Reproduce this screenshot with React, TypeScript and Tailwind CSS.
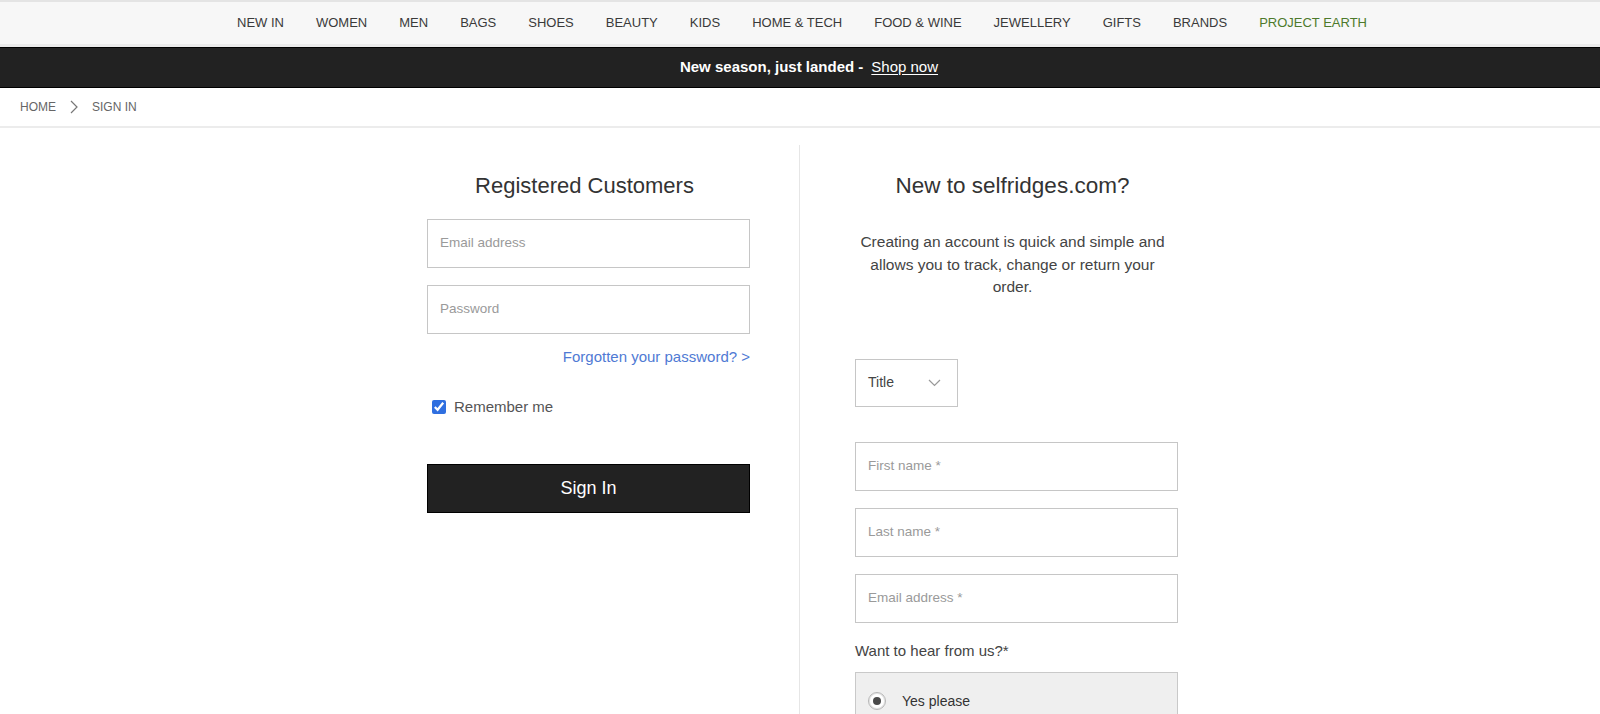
import React from "react";

const navItems = [
  "NEW IN",
  "WOMEN",
  "MEN",
  "BAGS",
  "SHOES",
  "BEAUTY",
  "KIDS",
  "HOME & TECH",
  "FOOD & WINE",
  "JEWELLERY",
  "GIFTS",
  "BRANDS",
];

function TextInput({ placeholder }: { placeholder: string }) {
  return (
    <div className="h-[49px] w-[323px] border border-[#c6c6c6] bg-white flex items-center pl-[12px]">
      <span className="text-[13.5px] text-[#9a9a9a]">{placeholder}</span>
    </div>
  );
}

export default function App() {
  return (
    <div
      className="min-h-[714px] bg-white text-[#333]"
      style={{ fontFamily: '"Liberation Sans", Arial, sans-serif' }}
    >
      {/* Top navigation */}
      <div className="border-t-2 border-[#e4e4e4] border-b-[3px] border-b-[#ebebeb] bg-[#f7f7f7] h-[47px] flex items-center justify-center">
        <nav className="flex items-center gap-[32px] text-[13px] text-[#3a3a3a] -mt-[1px] pl-[4px]">
          {navItems.map((n) => (
            <span key={n}>{n}</span>
          ))}
          <span className="text-[#4d7a2c]">PROJECT EARTH</span>
        </nav>
      </div>

      {/* Promo banner */}
      <div className="h-[41px] bg-[#222] border-y border-black flex items-center justify-center text-white text-[15px] pl-[18px]">
        <span className="font-bold">New season, just landed -</span>
        <span className="ml-[8px] underline underline-offset-2">Shop now</span>
      </div>

      {/* Breadcrumb */}
      <div className="h-[40px] border-b-2 border-[#ececec] flex items-center pl-[20px] text-[12px] text-[#666]">
        <span>HOME</span>
        <svg width="8" height="14" viewBox="0 0 8 14" className="ml-[14px] mr-[14px]">
          <polyline points="1,1 7,7 1,13" fill="none" stroke="#777" strokeWidth="1.2" />
        </svg>
        <span>SIGN IN</span>
      </div>

      {/* Main content */}
      <div className="flex justify-center pt-[17px] pl-[5px]">
        {/* Left column */}
        <div className="w-[323px] mr-[49px] pt-[27px] flex flex-col">
          <h2 className="h-[28px] leading-[28px] text-[22px] text-center text-[#333] pr-[8px]">
            Registered Customers
          </h2>
          <div className="mt-[19px]">
            <TextInput placeholder="Email address" />
          </div>
          <div className="mt-[17px]">
            <TextInput placeholder="Password" />
          </div>
          <div className="mt-[13px] h-[20px] leading-[20px] text-right text-[15px] text-[#4f7ad4]">
            Forgotten your password? &gt;
          </div>
          <label className="mt-[30px] h-[20px] flex items-center pl-[5px]">
            <input
              type="checkbox"
              checked
              readOnly
              className="w-[14px] h-[14px] accent-[#2f6fe0] m-0"
            />
            <span className="ml-[8px] text-[15px] text-[#555]">Remember me</span>
          </label>
          <button className="mt-[47px] h-[49px] w-[323px] bg-[#222] border border-black text-white text-[18px]">
            Sign In
          </button>
        </div>

        {/* Divider */}
        <div className="w-px bg-[#e6e6e6] min-h-[600px]" />

        {/* Right column */}
        <div className="w-[323px] ml-[55px] pt-[27px] flex flex-col">
          <h2 className="h-[28px] leading-[28px] text-[22.5px] text-center text-[#333] pr-[8px]">
            New to selfridges.com?
          </h2>
          <p className="mt-[31px] text-[15.5px] leading-[22.5px] text-center text-[#444] pr-[8px] whitespace-nowrap">
            Creating an account is quick and simple and
            <br />
            allows you to track, change or return your
            <br />
            order.
          </p>
          <div className="mt-[60px] h-[48px] w-[103px] border border-[#c6c6c6] flex items-center justify-between pl-[12px] pr-[16px]">
            <span className="text-[14px] text-[#444]">Title</span>
            <svg width="13" height="8" viewBox="0 0 13 8">
              <polyline points="1,1 6.5,6.5 12,1" fill="none" stroke="#999" strokeWidth="1.2" />
            </svg>
          </div>
          <div className="mt-[35px]">
            <TextInput placeholder="First name *" />
          </div>
          <div className="mt-[17px]">
            <TextInput placeholder="Last name *" />
          </div>
          <div className="mt-[17px]">
            <TextInput placeholder="Email address *" />
          </div>
          <div className="mt-[18px] h-[20px] leading-[20px] text-[15px] text-[#444]">
            Want to hear from us?*
          </div>
          <div className="mt-[11px] w-[323px] h-[120px] bg-[#efefef] border border-[#c9c9c9] pt-[18px] pl-[12px]">
            <div className="flex items-center">
              <span className="w-[18px] h-[18px] rounded-full border border-[#b5b5b5] bg-white flex items-center justify-center shadow-[inset_0_0_0_1px_#e4e4e4]">
                <span className="w-[8px] h-[8px] rounded-full bg-[#4a4a4a]" />
              </span>
              <span className="ml-[16px] text-[14px] text-[#333]">Yes please</span>
            </div>
          </div>
        </div>
      </div>
    </div>
  );
}
